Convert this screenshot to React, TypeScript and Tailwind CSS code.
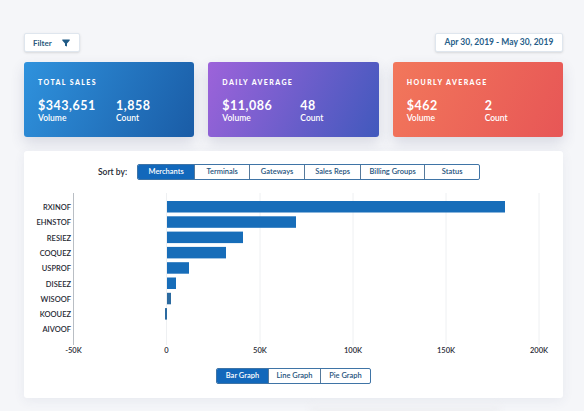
const font = "font-['Lato','Open_Sans',sans-serif]";

const cards = [
  { title: "TOTAL SALES", volume: "$343,651", count: "1,858", bg: "bg-[linear-gradient(115deg,#2f92dd,#1a5ca6)]" },
  { title: "DAILY AVERAGE", volume: "$11,086", count: "48", bg: "bg-[linear-gradient(115deg,#9d63da,#4159bd)]" },
  { title: "HOURLY AVERAGE", volume: "$462", count: "2", bg: "bg-[linear-gradient(115deg,#f2775b,#e75656)]" },
];

const sortTabs = [
  { label: "Merchants", w: "w-[56px]" },
  { label: "Terminals", w: "w-[55px]" },
  { label: "Gateways", w: "w-[55px]" },
  { label: "Sales Reps", w: "w-[56px]" },
  { label: "Billing Groups", w: "w-[64px]" },
  { label: "Status", w: "w-[55px]" },
];

const graphTabs = [
  { label: "Bar Graph", w: "w-[51px]" },
  { label: "Line Graph", w: "w-[52px]" },
  { label: "Pie Graph", w: "w-[50px]" },
];

const rows = [
  { name: "RXINOF", x: 143, w: 338 },
  { name: "EHNSTOF", x: 143, w: 129 },
  { name: "RESIEZ", x: 143, w: 76 },
  { name: "COQUEZ", x: 143, w: 59 },
  { name: "USPROF", x: 143, w: 22 },
  { name: "DISEEZ", x: 143, w: 9 },
  { name: "WISOOF", x: 143, w: 4 },
  { name: "KOOUEZ", x: 141, w: 2 },
  { name: "AIVOOF", x: 143, w: 0 },
];

const ticks = [
  { label: "-50K", x: 49.5 },
  { label: "0", x: 142.5 },
  { label: "50K", x: 236 },
  { label: "100K", x: 329 },
  { label: "150K", x: 422 },
  { label: "200K", x: 515 },
];

function Segmented({ tabs }: { tabs: { label: string; w: string }[] }) {
  return (
    <div className="flex h-[16px] overflow-hidden rounded-[2px] border border-[#3f74a6] bg-white">
      {tabs.map((tab, i) => (
        <div
          key={tab.label}
          className={`${tab.w} flex items-center justify-center whitespace-nowrap text-[7.5px] font-semibold ${
            i === 0 ? "bg-[#1268bb] text-white" : "border-l border-[#55799b] text-[#24527c]"
          }`}
        >
          {tab.label}
        </div>
      ))}
    </div>
  );
}

function FilterIcon() {
  return (
    <svg width="8" height="8" viewBox="0 0 8 8" fill="#1f5a85">
      <path d="M0.3 0.5h7.4v1L5 4.4V7.6L3 6.8V4.4L0.3 1.5z" />
    </svg>
  );
}

export default function App() {
  return (
    <div className={`${font} relative h-[411px] w-[584px] overflow-hidden bg-[#f5f6f9] pt-[33px] pl-[24px] pr-[21px]`}>
      <div className="flex items-center justify-between">
        <div className="flex h-[19px] w-[56px] items-center gap-[10px] rounded-[2px] border border-[#dfe6ee] bg-white pl-[8px] text-[8px] font-bold text-[#2b5a7d] shadow-sm">
          Filter
          <FilterIcon />
        </div>
        <div className="flex h-[19px] w-[128px] items-center justify-center rounded-[2px] border border-[#dfe6ee] bg-white text-[8.5px] font-bold text-[#265e8a] shadow-sm">
          Apr 30, 2019 - May 30, 2019
        </div>
      </div>

      <div className="mt-[10px] grid grid-cols-3 gap-[14px]">
        {cards.map((card) => (
          <div
            key={card.title}
            className={`${card.bg} h-[75px] rounded-[3px] pt-[15px] pl-[14px] text-white shadow-[0_6px_14px_rgba(60,70,110,0.16)]`}
          >
            <div className="text-[7px] leading-[10px] font-black tracking-[1.4px]">{card.title}</div>
            <div className="mt-[12px] flex">
              <div className="w-[78px]">
                <div className="text-[12.5px] leading-[14px] font-bold tracking-[0.5px]">{card.volume}</div>
                <div className="text-[8.5px] leading-[10px] font-semibold">Volume</div>
              </div>
              <div>
                <div className="text-[12.5px] leading-[14px] font-bold tracking-[0.5px]">{card.count}</div>
                <div className="text-[8.5px] leading-[10px] font-semibold">Count</div>
              </div>
            </div>
          </div>
        ))}
      </div>

      <div className="relative mt-[14px] h-[247px] rounded-[3px] bg-white pt-[13px] shadow-[0_3px_12px_rgba(60,70,110,0.07)]">
        <div className="flex items-center pl-[74px]">
          <span className="mr-[10px] text-[8.5px] font-semibold text-[#1f2933]">Sort by:</span>
          <Segmented tabs={sortTabs} />
        </div>

        <svg width="539" height="170" viewBox="0 0 539 170" className="mt-[13px] block">
          {ticks.map((t, i) => (
            <line key={t.label} x1={t.x} x2={t.x} y1="0" y2="152" stroke={i === 0 ? "#b9bec4" : "#eef0f2"} strokeWidth="1" />
          ))}
          {rows.map((r, i) => (
            <g key={r.name}>
              <text x="47" y={17 + i * 15.3} textAnchor="end" fontSize="7.5" fontWeight="600" fill="#1f2933">
                {r.name}
              </text>
              {r.w > 0 && <rect x={r.x} y={8 + i * 15.3} width={r.w} height="11.5" fill={i > 5 ? "#2b6aa0" : "#176db9"} />}
            </g>
          ))}
          {ticks.map((t) => (
            <text key={t.label} x={t.x} y="160" textAnchor="middle" fontSize="7.5" fontWeight="600" fill="#1f2933">
              {t.label}
            </text>
          ))}
        </svg>

        <div className="mt-[5px] flex pl-[192px]">
          <Segmented tabs={graphTabs} />
        </div>
      </div>

      <div className="absolute top-[405px] left-[310px] h-[20px] w-[190px] rounded-[3px] bg-[#eff0f3] blur-[3px]" />
    </div>
  );
}
